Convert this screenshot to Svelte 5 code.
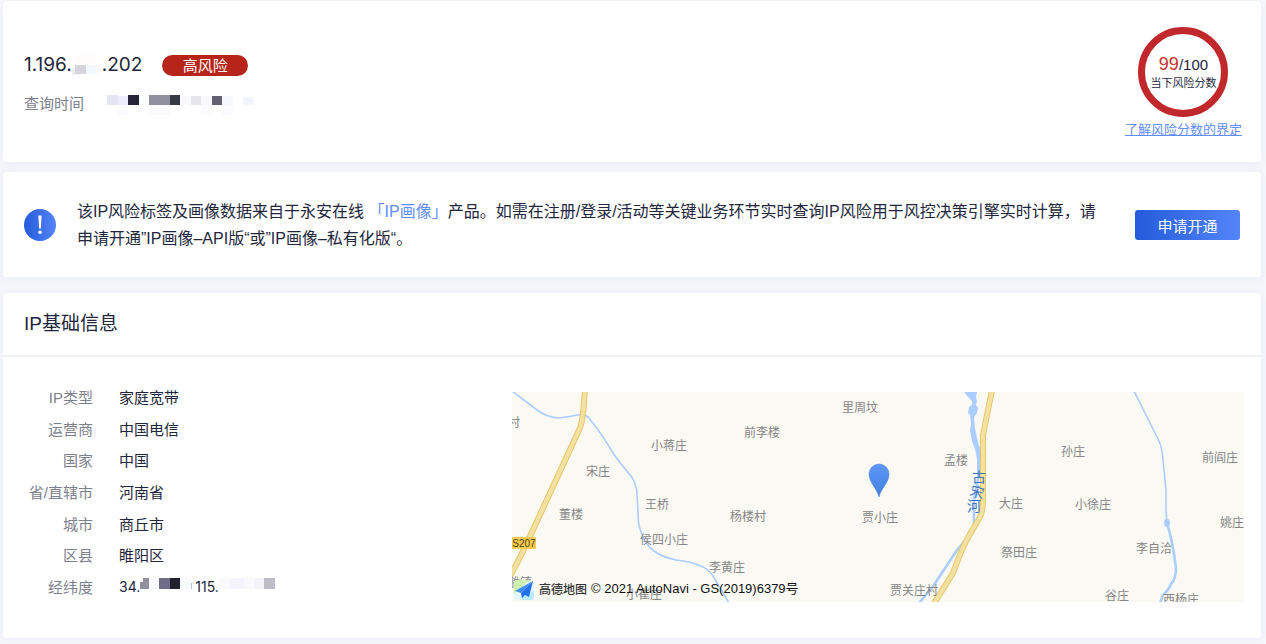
<script lang="ts">
  type Block = { x: number; y: number; w: number; h: number; fill: string };

  const timeMask: Block[] = [
    { x: 0, y: 2, w: 11, h: 10, fill: '#e4e4f2' },
    { x: 11, y: 3, w: 10, h: 9, fill: '#eceefd' },
    { x: 21, y: 2, w: 11, h: 10, fill: '#27243a' },
    { x: 32, y: 2, w: 10, h: 10, fill: '#fafcfd' },
    { x: 42, y: 2, w: 21, h: 10, fill: '#8f929e' },
    { x: 63, y: 2, w: 10, h: 10, fill: '#363a42' },
    { x: 73, y: 3, w: 11, h: 9, fill: '#f7f7fc' },
    { x: 84, y: 3, w: 10, h: 9, fill: '#e5e5eb' },
    { x: 94, y: 3, w: 11, h: 9, fill: '#f8f8fd' },
    { x: 105, y: 3, w: 10, h: 9, fill: '#625f73' },
    { x: 115, y: 3, w: 11, h: 9, fill: '#f7f7ff' },
    { x: 136, y: 4, w: 11, h: 8, fill: '#f2f4ff' },
    { x: 11, y: 12, w: 10, h: 10, fill: '#fbfaff' },
    { x: 42, y: 12, w: 21, h: 10, fill: '#fbfafc' },
    { x: 94, y: 12, w: 11, h: 10, fill: '#fcfcff' },
    { x: 115, y: 12, w: 11, h: 10, fill: '#fbfbff' },
  ];
  const ipMask: Block[] = [
    { x: 3, y: 0, w: 21, h: 10, fill: '#fdfcfb' },
    { x: 0, y: 13, w: 3, h: 7, fill: '#ededf0' },
    { x: 3, y: 10, w: 11, h: 9, fill: '#d5d4da' },
    { x: 14, y: 10, w: 10, h: 9, fill: '#f2f8fd' },
    { x: 24, y: 10, w: 3, h: 9, fill: '#fbfbfc' },
  ];
  const latMask: Block[] = [
    { x: 3, y: 0, w: 6, h: 11, fill: '#918f9c' },
    { x: 0, y: 4, w: 3, h: 7, fill: '#918f9c' },
    { x: 9, y: 0, w: 10, h: 11, fill: '#f9fafe' },
    { x: 19, y: 0, w: 11, h: 11, fill: '#706e87' },
    { x: 30, y: 0, w: 10, h: 11, fill: '#22222f' },
    { x: 40, y: 0, w: 11, h: 11, fill: '#fafdfd' },
    { x: 51, y: 5, w: 1, h: 6, fill: '#c2c3cc' },
  ];
  const lngMask: Block[] = [
    { x: 0, y: 0, w: 11, h: 11, fill: '#faf9fc' },
    { x: 11, y: 0, w: 14, h: 11, fill: '#f5f4fe' },
    { x: 25, y: 0, w: 10, h: 11, fill: '#f9f9fd' },
    { x: 35, y: 0, w: 10, h: 11, fill: '#f2f2f8' },
    { x: 45, y: 0, w: 11, h: 11, fill: '#bfbdc8' },
  ];

  const info = [
    ['IP类型', '家庭宽带'],
    ['运营商', '中国电信'],
    ['国家', '中国'],
    ['省/直辖市', '河南省'],
    ['城市', '商丘市'],
    ['区县', '睢阳区'],
  ];

  const places: [string, number, number][] = [
    ['村', 2, 30],
    ['小蒋庄', 157, 53],
    ['宋庄', 86, 79],
    ['董楼', 59, 122],
    ['王桥', 145, 112],
    ['侯四小庄', 152, 147],
    ['李黄庄', 215, 175],
    ['小崔庄', 132, 202],
    ['前李楼', 250, 40],
    ['杨楼村', 236, 124],
    ['里周坟', 348, 15],
    ['孟楼', 444, 68],
    ['贾小庄', 368, 125],
    ['贾关庄村', 402, 198],
    ['大庄', 499, 111],
    ['孙庄', 561, 59],
    ['小徐庄', 581, 112],
    ['祭田庄', 507, 160],
    ['前阎庄', 708, 65],
    ['姚庄', 720, 130],
    ['李自洽', 642, 156],
    ['谷庄', 605, 203],
    ['西杨庄', 669, 207],
    ['雒镇', 8, 190],
  ];

  const roads = [
    'M73 -2 L72 10 Q71 28 68 36 L20 140 Q10 162 5 171 L-2 184',
    'M480 -2 L471 43 L471 108 Q471 120 467 127 Q455 146 449 160 L441 181 L421 213',
  ];
</script>

{#snippet mask(blocks: Block[], width: number, height: number)}
  <svg class="mask" {width} {height} aria-hidden="true" shape-rendering="crispEdges">
    {#each blocks as b}
      <rect x={b.x} y={b.y} width={b.w} height={b.h} fill={b.fill} />
    {/each}
  </svg>
{/snippet}

<main class="page">
  <section class="card summary">
    <div class="query">
      <div class="ip-row">
        <h1 class="ip">1.196.{@render mask(ipMask, 30, 20)}.202</h1>
        <span class="badge">高风险</span>
      </div>
      <div class="time-row">
        <span>查询时间</span>
        {@render mask(timeMask, 148, 22)}
      </div>
    </div>
    <div class="score">
      <div class="ring">
        <div class="value"><strong>99</strong>/100</div>
        <div class="caption">当下风险分数</div>
      </div>
      <a href="#score">了解风险分数的界定</a>
    </div>
  </section>

  <section class="card notice">
    <svg class="notice-icon" width="32" height="32" viewBox="0 0 32 32" aria-hidden="true">
      <defs>
        <linearGradient id="notice-fill">
          <stop offset="0" stop-color="#245bdb" />
          <stop offset="1" stop-color="#5484f8" />
        </linearGradient>
      </defs>
      <circle cx="16" cy="16" r="16" fill="url(#notice-fill)" />
      <path d="M14.4 6.5 h3.2 l-.7 13 h-1.8 z" fill="#fff" />
      <circle cx="16" cy="23.3" r="1.8" fill="#fff" />
    </svg>
    <p>
      该IP风险标签及画像数据来自于永安在线 <a href="#profile">「IP画像」</a>产品。如需在注册/登录/活动等关键业务环节实时查询IP风险用于风控决策引擎实时计算&#xFF0C;请申请开通”IP画像–API版“或”IP画像–私有化版“。
    </p>
    <button type="button">申请开通</button>
  </section>

  <section class="card">
    <h2>IP基础信息</h2>
    <div class="detail">
      <dl>
        {#each info as [label, value]}
          <dt>{label}</dt>
          <dd>{value}</dd>
        {/each}
        <dt>经纬度</dt>
        <dd class="coords">
          34.{@render mask(latMask, 55, 16)}115.{@render mask(lngMask, 56, 16)}
        </dd>
      </dl>

      <div class="map">
        <svg class="tiles" viewBox="0 0 732 210" preserveAspectRatio="xMidYMid slice" role="img" aria-label="地图">
          <defs>
            <linearGradient id="pin-fill" x1="0" y1="0" x2="0" y2="1">
              <stop offset="0" stop-color="#5f97f8" />
              <stop offset="1" stop-color="#3f80dc" />
            </linearGradient>
          </defs>
          <g class="water">
            <path d="M0 -1 L25 18 Q34 25 47 26 Q55 25 66 23 Q72 22 76 25 Q88 39 101 61 Q107 70 119 84 Q124 91 125 101 L126 121 Q126 133 129 140 Q133 152 142 159 Q150 165 164 168 Q180 170 186 173 Q196 176 201 184 L217 211" />
            <path d="M622 -1 L647 49 Q650 55 651 68 L654 98 L654 118 L655 131" />
            <path class="wide" d="M655 131 Q660 148 662 162 L664 176 Q664 187 659 192 Q656 199 651 203 L648 211" />
            <path class="wide" d="M467 82 L462 108 L462 134 Q460 141 445 158 L422 193 L407 211" />
          </g>
          <g fill="#abcdff">
            <ellipse cx="655" cy="131" rx="3" ry="4" />
            <path d="M452 0 L465 0 L464 5 L465 9 L464 13 L466 16 L465 21 L462 25 L463 36 L465 46 L467 54 L470 59 L469 86 L465 86 L465 67 L463 57 L460 49 L458 38 L459 32 L458 23 L456 21 L457 15 L460 13 L460 9 L457 6 Z" />
          </g>
          {#each roads as d}
            <path class="road-edge" {d} />
          {/each}
          {#each roads as d}
            <path class="road" {d} />
          {/each}
          <g class="places">
            {#each places as [name, x, y]}
              <text {x} {y} dy="5">{name}</text>
            {/each}
          </g>
          <g class="river-name">
            <text x="467" y="90">古</text>
            <text x="465" y="105" transform="rotate(16 465 100)">宋</text>
            <text x="462" y="119">河</text>
          </g>
          <rect x="-6" y="145" width="30" height="12" rx="1" fill="#f7cb4d" />
          <text class="road-name" x="12" y="155">S207</text>
          <path
            d="M367 105 C365 96 357 91 357 82 A10 10 0 0 1 377 82 C377 91 369 96 367 105 Z"
            fill="url(#pin-fill)"
            stroke="#3c78cf"
            stroke-width="0.5"
          />
        </svg>
        <div class="credit">
          <svg width="22" height="22" viewBox="0 0 22 22" aria-hidden="true">
            <rect x="1" y="1" width="20" height="20" rx="3" fill="#e4f6fb" />
            <path d="M4 1 H17 L1 15 V4 Q1 1 4 1 Z" fill="#cdf2b0" />
            <path d="M8 18 L21 12 V18 Q21 21 18 21 H9 Z" fill="#b9ecfb" />
            <path d="M20 2 L2 12 L8 14 Z" fill="#3f8df5" />
            <path d="M20 2 L8 14 L9 19 L12 16 L16 18 Z" fill="#2470e8" />
          </svg>
          <span class="brand">高德地图</span>
          <span class="copyright">© 2021 AutoNavi - GS(2019)6379号</span>
        </div>
      </div>
    </div>
  </section>
</main>

<style>
  :global(body) {
    margin: 0;
    background: #f5f6fb;
  }
  .page {
    padding: 1px 5px 6px 3px;
    font-family: 'Liberation Sans', 'Noto Sans CJK SC', sans-serif;
    font-size: 15px;
    color: #22263d;
  }
  .card {
    background: #fff;
    border-radius: 4px;
    box-shadow: 0 2px 10px rgba(60, 90, 200, 0.06);
  }
  .mask {
    display: block;
    flex-shrink: 0;
  }
  a {
    color: #5f8ef8;
  }

  .summary {
    display: flex;
    justify-content: space-between;
    box-sizing: border-box;
    min-height: 160px;
    padding: 26px 19px 22px 21px;
  }
  .query {
    padding-top: 24px;
  }
  .ip-row {
    display: flex;
    align-items: center;
    gap: 20px;
  }
  .ip {
    display: flex;
    align-items: center;
    margin: 0;
    font-family: Inter, 'Liberation Sans', sans-serif;
    font-size: 19px;
    font-weight: 400;
    line-height: 28px;
  }
  .badge {
    width: 86px;
    border-radius: 11px;
    background: #b6241a;
    color: #fff;
    line-height: 21px;
    text-align: center;
  }
  .time-row {
    display: flex;
    align-items: center;
    gap: 23px;
    margin-top: 14px;
    color: #7d808e;
    line-height: 22px;
  }
  .score {
    display: flex;
    flex-direction: column;
    align-items: center;
  }
  .ring {
    display: flex;
    flex-direction: column;
    align-items: center;
    justify-content: center;
    box-sizing: border-box;
    width: 90px;
    height: 90px;
    border: 7px solid #c0282b;
    border-radius: 50%;
    white-space: nowrap;
  }
  .value {
    line-height: 20px;
  }
  .value strong {
    color: #c9302f;
    font-size: 18px;
    font-weight: 400;
  }
  .caption {
    font-size: 11px;
    line-height: 16px;
  }
  .score a {
    margin-top: 3px;
    font-size: 13px;
    line-height: 20px;
  }

  .notice {
    display: flex;
    align-items: center;
    margin-top: 10px;
    padding: 26px 21px 25px;
  }
  .notice-icon {
    flex-shrink: 0;
    margin-right: 21px;
  }
  .notice p {
    flex: 1;
    margin: 0 32px 0 0;
    font-size: 16px;
    line-height: 27px;
  }
  .notice a {
    text-decoration: none;
  }
  .notice button {
    flex-shrink: 0;
    width: 105px;
    height: 30px;
    padding: 0;
    border: 0;
    border-radius: 3px;
    background: linear-gradient(90deg, #245bdb, #5484f8);
    color: #fff;
    font-family: inherit;
    font-size: 15px;
    cursor: pointer;
  }

  h2 {
    margin: 16px 0 0;
    padding: 0 21px;
    border-bottom: 2px solid #eeeff2;
    font-size: 19px;
    font-weight: 400;
    line-height: 62px;
  }
  .detail {
    display: grid;
    grid-template-columns: 488px 1fr;
    padding: 24px 17px 36px 21px;
  }
  dl {
    display: grid;
    grid-template-columns: 69px 1fr;
    grid-auto-rows: 1fr;
    column-gap: 26px;
    align-items: center;
    min-height: 220px;
    margin: 0;
  }
  dt {
    color: #7d808e;
    text-align: right;
    white-space: nowrap;
  }
  dd {
    margin: 0;
  }
  .coords {
    display: flex;
    align-items: center;
    font-family: Inter, 'Liberation Sans', sans-serif;
    font-size: 14px;
  }
  .map {
    position: relative;
    height: 210px;
    margin-top: 11px;
    overflow: hidden;
    background: #fbf9f4;
  }
  .tiles {
    display: block;
    width: 100%;
    height: 100%;
  }
  .water path {
    fill: none;
    stroke: #abcdff;
    stroke-width: 1.6;
  }
  .water .wide {
    stroke-width: 2.6;
  }
  .road-edge,
  .road {
    fill: none;
    stroke: #e6c766;
    stroke-width: 6;
    stroke-linejoin: round;
  }
  .road {
    stroke: #f3e1a4;
    stroke-width: 4;
  }
  .places {
    fill: #858585;
    font-size: 12px;
    text-anchor: middle;
  }
  .river-name {
    fill: #3f74c4;
    font-size: 14px;
    text-anchor: middle;
  }
  .road-name {
    fill: #4a4022;
    font-size: 10px;
    text-anchor: middle;
  }
  .credit {
    position: absolute;
    bottom: 0;
    left: 1px;
    display: flex;
    align-items: center;
    gap: 4px;
    color: #111;
    font-size: 12px;
    line-height: 22px;
    white-space: nowrap;
  }
  .brand {
    color: #333;
    font-weight: 500;
  }
  .copyright {
    padding-bottom: 2px;
    font-size: 13px;
  }
</style>
